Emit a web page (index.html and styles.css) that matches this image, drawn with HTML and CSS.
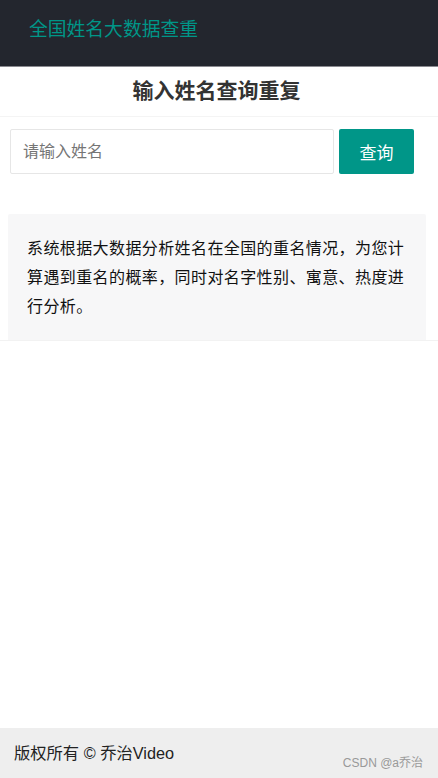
FILE: index.html
```html
<!DOCTYPE html>
<html lang="zh">
<head>
<meta charset="utf-8">
<title>全国姓名大数据查重</title>
<link rel="stylesheet" href="styles.css">
</head>
<body>
<header class="header">
  <div class="logo">全国姓名大数据查重</div>
</header>
<main class="main">
  <h1 class="title">输入姓名查询重复</h1>
  <div class="search">
    <input class="input" type="text" placeholder="请输入姓名">
    <button class="btn" type="button">查询</button>
  </div>
  <div class="info">系统根据大数据分析姓名在全国的重名情况，为您计算遇到重名的概率，同时对名字性别、寓意、热度进行分析。</div>
</main>
<footer class="footer">
  <span class="copy">版权所有 © 乔治Video</span>
  <span class="mark">CSDN @a乔治</span>
</footer>
</body>
</html>
```
FILE: styles.css
```css
* { box-sizing: border-box; }
html, body { margin: 0; padding: 0; }
body {
  font-family: "Liberation Sans", "Noto Sans CJK SC", sans-serif;
  color: #333;
  background: #fff;
  height: 778px;
  position: relative;
}
.header {
  height: 67px;
  background: #23262e;
  border-bottom: 1px solid #8a8a90;
  display: flex;
  align-items: center;
  padding-left: 29px;
}
.logo {
  color: #009688;
  font-size: 18.8px;
  line-height: 24px;
  margin-top: -6px;
}
.main {
  border-bottom: 1px solid #f2f2f2;
}
.title {
  margin: 0;
  height: 50px;
  line-height: 48px;
  text-align: center;
  font-size: 21px;
  font-weight: bold;
  color: #333;
  border-bottom: 1px solid #f4f4f4;
  padding-right: 5px;
}
.search {
  display: flex;
  gap: 5px;
  padding: 12px 0 0 10px;
}
.input {
  width: 324px;
  height: 45px;
  border: 1px solid #e6e6e6;
  border-radius: 2px;
  padding: 0 12px;
  font-size: 16px;
  font-family: "Liberation Sans", "Noto Sans CJK SC", sans-serif;
  color: #333;
  outline: none;
}
.input::placeholder { color: #757575; }
.btn {
  width: 75px;
  height: 45px;
  background: #009688;
  color: #fff;
  border: none;
  border-radius: 2px;
  font-size: 17px;
  font-family: "Liberation Sans", "Noto Sans CJK SC", sans-serif;
  padding: 0;
}
.info {
  margin: 40px 12px 0 8px;
  background: #f7f7f8;
  padding: 20px 18px 19px 19px;
  font-size: 16px;
  letter-spacing: 0.4px;
  line-height: 29px;
  color: #111;
  border-radius: 2px 2px 0 0;
}
.footer {
  position: absolute;
  left: 0;
  right: 0;
  bottom: 0;
  height: 50px;
  background: #eee;
  display: flex;
  align-items: center;
  padding-left: 14px;
}
.copy {
  font-size: 16.3px;
  color: #222;
  margin-top: -2px;
}
.mark {
  position: absolute;
  right: 15px;
  bottom: 8px;
  font-size: 12px;
  color: #999;
}
```
